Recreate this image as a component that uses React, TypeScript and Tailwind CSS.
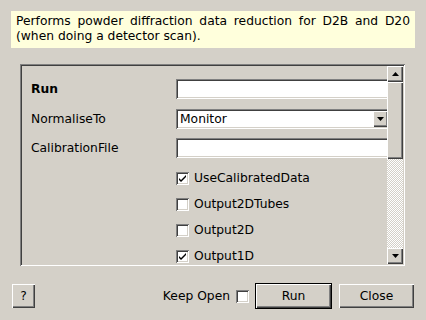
import React from "react";

const SUNKEN =
  "shadow-[inset_1px_1px_0_#808080,inset_-1px_-1px_0_#ffffff,inset_2px_2px_0_#404040,inset_-2px_-2px_0_#d4d0c8]";
const RAISED =
  "shadow-[inset_1px_1px_0_#ffffff,inset_-1px_-1px_0_#404040,inset_-2px_-2px_0_#808080]";

function Arrow({ up }: { up?: boolean }) {
  return (
    <svg width="7" height="4" viewBox="0 0 7 4">
      {up ? <polygon points="3.5,0 7,4 0,4" fill="#000" /> : <polygon points="0,0 7,0 3.5,4" fill="#000" />}
    </svg>
  );
}

function Check({ on }: { on?: boolean }) {
  return (
    <span className={`flex h-[13px] w-[13px] shrink-0 items-center justify-center bg-white ${SUNKEN}`}>
      {on && (
        <svg width="7" height="7" viewBox="0 0 7 7">
          <path d="M0 3 L0 5 L2 7 L7 2 L7 0 L2 5 Z" fill="#000" />
        </svg>
      )}
    </span>
  );
}

function CheckRow({ label, on }: { label: string; on?: boolean }) {
  return (
    <div className="flex h-[26px] items-center gap-[5px]">
      <Check on={on} />
      <span>{label}</span>
    </div>
  );
}

function Field({ label, bold, children }: { label: string; bold?: boolean; children: React.ReactNode }) {
  return (
    <div className="grid h-[20px] grid-cols-[145px_1fr] items-center">
      <span className={bold ? "font-bold" : ""}>{label}</span>
      {children}
    </div>
  );
}

export default function App() {
  return (
    <div className="flex h-[320px] w-[426px] flex-col bg-[#d4d0c8] font-['DejaVu_Sans',sans-serif] text-[12.3px] text-black">
      <div className="mx-[11px] mt-[11px] h-[37px] bg-[#ffffdc] px-[5px] py-[3px] text-justify leading-[15px]">
        Performs powder diffraction data reduction for D2B and D20 (when doing a detector scan).
      </div>

      <div className={`mt-[16px] ml-[20px] flex h-[202px] w-[385px] p-[2px] ${SUNKEN}`}>
        <div className="flex min-w-0 flex-1 flex-col overflow-hidden pt-[13px] pl-[9px]">
          <Field label="Run" bold>
            <div className={`h-[20px] w-[216px] bg-white ${SUNKEN}`} />
          </Field>
          <div className="mt-[10px]">
            <Field label="NormaliseTo">
              <div className={`flex h-[20px] w-[214px] items-center bg-white pl-[4px] ${SUNKEN}`}>
                <span className="flex-1">Monitor</span>
                <span className={`mr-[2px] flex h-[16px] w-[15px] items-center justify-center bg-[#d4d0c8] ${RAISED}`}>
                  <Arrow />
                </span>
              </div>
            </Field>
          </div>
          <div className="mt-[9px]">
            <Field label="CalibrationFile">
              <div className={`h-[20px] w-[216px] bg-white ${SUNKEN}`} />
            </Field>
          </div>
          <div className="mt-[7px] flex flex-col pl-[145px]">
            <CheckRow label="UseCalibratedData" on />
            <CheckRow label="Output2DTubes" />
            <CheckRow label="Output2D" />
            <CheckRow label="Output1D" on />
          </div>
        </div>

        <div className="flex w-[16px] flex-col">
          <div className={`flex h-[16px] items-center justify-center bg-[#d4d0c8] ${RAISED}`}>
            <Arrow up />
          </div>
          <div className={`h-[77px] bg-[#d4d0c8] ${RAISED}`} />
          <div className="flex-1 bg-[repeating-conic-gradient(#d4d0c8_0_25%,#ffffff_0_50%)] bg-[length:2px_2px]" />
          <div className={`flex h-[16px] items-center justify-center bg-[#d4d0c8] ${RAISED}`}>
            <Arrow />
          </div>
        </div>
      </div>

      <div className="mt-[17px] flex items-center justify-between px-[12px]">
        <button className={`h-[24px] w-[23px] bg-[#d4d0c8] ${RAISED}`}>?</button>
        <div className="flex items-center">
          <span>Keep Open</span>
          <span className="ml-[6px]">
            <Check />
          </span>
          <button className={`ml-[6px] h-[26px] w-[77px] border border-black bg-[#d4d0c8] ${RAISED}`}>Run</button>
          <button className={`ml-[7px] h-[24px] w-[75px] bg-[#d4d0c8] ${RAISED}`}>Close</button>
        </div>
      </div>
    </div>
  );
}
